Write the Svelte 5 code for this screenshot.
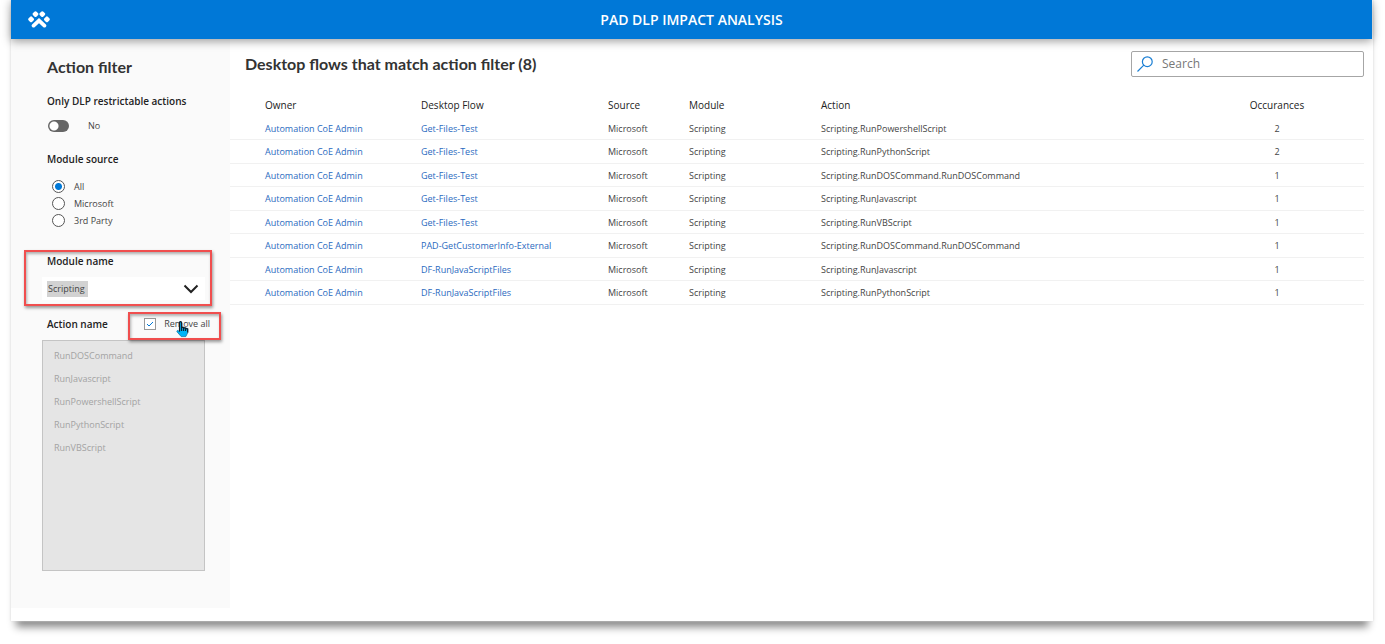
<script>
  const rows = [
    ['Get-Files-Test', 'RunPowershellScript', 2],
    ['Get-Files-Test', 'RunPythonScript', 2],
    ['Get-Files-Test', 'RunDOSCommand.RunDOSCommand', 1],
    ['Get-Files-Test', 'RunJavascript', 1],
    ['Get-Files-Test', 'RunVBScript', 1],
    ['PAD-GetCustomerInfo-External', 'RunDOSCommand.RunDOSCommand', 1],
    ['DF-RunJavaScriptFiles', 'RunJavascript', 1],
    ['DF-RunJavaScriptFiles', 'RunPythonScript', 1]
  ];
  const actions = ['RunDOSCommand', 'RunJavascript', 'RunPowershellScript', 'RunPythonScript', 'RunVBScript'];
  const sources = ['All', 'Microsoft', '3rd Party'];
  let source = $state('All');
  let removeAll = $state(true);
  let restrictable = $state(false);
  let search = $state('');
  const shown = $derived(rows.filter((r) => (r[0] + r[1]).toLowerCase().includes(search.toLowerCase())));
</script>

<div class="card">
  <header>
    <svg class="logo" viewBox="0 0 22 17" width="22" height="17" aria-hidden="true">
      <g fill="#fff">
        <rect x="5" y="0.6" width="5" height="5" rx="1.6" transform="rotate(45 7.5 3.1)" />
        <rect x="11.8" y="0.6" width="5" height="5" rx="1.6" transform="rotate(45 14.3 3.1)" />
        <rect x="0.6" y="5.8" width="5" height="5" rx="1.6" transform="rotate(45 3.1 8.3)" />
        <rect x="16.4" y="5.8" width="5" height="5" rx="1.6" transform="rotate(45 18.9 8.3)" />
      </g>
      <path d="M5.6 14.6 11 9.6l5.4 5" fill="none" stroke="#fff" stroke-width="3.8" stroke-linecap="round" stroke-linejoin="miter" />
    </svg>
    <h1>PAD DLP IMPACT ANALYSIS</h1>
  </header>

  <div class="body">
    <aside>
      <h2>Action filter</h2>

      <h3>Only DLP restrictable actions</h3>
      <label class="toggle">
        <input type="checkbox" role="switch" bind:checked={restrictable} />
        <span>{restrictable ? 'Yes' : 'No'}</span>
      </label>

      <h3 id="source-title">Module source</h3>
      <div class="radios" role="radiogroup" aria-labelledby="source-title">
        {#each sources as s}
          <label><input type="radio" name="source" value={s} bind:group={source} /><span>{s}</span></label>
        {/each}
      </div>

      <div class="module">
        <label for="module">Module name</label>
        <div class="combo">
          <select id="module"><option>Scripting</option></select>
          <svg viewBox="0 0 16 10" width="16" height="10" aria-hidden="true">
            <path d="M1.5 1.5 8 8l6.5-6.5" fill="none" stroke="#222" stroke-width="2" />
          </svg>
        </div>
        <div class="mark mark-module"></div>
      </div>

      <div class="action-head">
        <label for="actions">Action name</label>
        <label class="remove"><input type="checkbox" bind:checked={removeAll} /><span>Remove all</span></label>
        <div class="mark mark-remove"></div>
        <svg class="hand" viewBox="0 0 13 17" width="13" height="17" aria-hidden="true">
          <path d="M3.5 1.5c0-1.200 2-1.200 2 0v4.500l6.200 1.500v4.300L9.800 15.600H5.200L1 10.800c-.6-1 .6-1.800 1.500-1l1 1z" fill="#00b4f8" stroke="#0a6f9c" stroke-width=".7" />
          <path d="M3.500 10.500v-9c0-1.200 2-1.200 2 0V10M5.500 6.200l2 .2V10M7.500 6.700l2 .4V10M9.500 7.300l2.200.6V11.500" fill="none" stroke="#10202c" stroke-width="1.200" />
        </svg>
      </div>
      <select id="actions" multiple disabled={removeAll}>
        {#each actions as a}<option>{a}</option>{/each}
      </select>
    </aside>

    <main>
      <div class="top">
        <h2>Desktop flows that match action filter ({shown.length})</h2>
        <label class="search">
          <svg viewBox="0 0 16 16" width="16" height="16" aria-hidden="true">
            <circle cx="10.3" cy="5.7" r="4.9" fill="none" stroke="#1b7fd4" stroke-width="1.2" />
            <path d="M6.8 9.2.5 15.5" stroke="#1b7fd4" stroke-width="1.2" />
          </svg>
          <input type="text" placeholder="Search" aria-label="Search" bind:value={search} />
        </label>
      </div>

      <table>
        <thead>
          <tr>
            <th class="owner">Owner</th><th class="flow">Desktop Flow</th><th class="src">Source</th>
            <th class="mod">Module</th><th>Action</th><th class="num">Occurances</th>
          </tr>
        </thead>
        <tbody>
          {#each shown as [flow, action, count]}
            <tr>
              <td class="owner"><a href="#owner">Automation CoE Admin</a></td>
              <td><a href="#flow">{flow}</a></td>
              <td>Microsoft</td>
              <td>Scripting</td>
              <td>Scripting.{action}</td>
              <td class="num">{count}</td>
            </tr>
          {/each}
        </tbody>
      </table>
    </main>
  </div>
</div>

<style>
  :global(body) { background: #fff; }
  * { box-sizing: border-box; }
  h1, h2, h3 { margin: 0; }
  .card {
    margin: 0 12px 20px 11px;
    padding-bottom: 13px;
    background: #fff;
    color: #444;
    font: 9px/12px "Open Sans", "Noto Sans", sans-serif;
    box-shadow: 0 0 2px #ddd, 0 11px 8px -5px #888;
  }
  header {
    position: relative;
    z-index: 1;
    display: grid;
    grid-template-columns: 40px 1fr 40px;
    align-items: center;
    height: 39px;
    margin-right: 1px;
    background: #0078d7;
    box-shadow: 0 2px 9px rgba(0, 0, 0, 0.4);
  }
  .logo { margin-left: 17px; }
  h1 { color: #fff; font-size: 14px; line-height: 20px; font-weight: 600; text-align: center; }
  .body { display: flex; }
  aside {
    flex: none;
    width: 219px;
    padding: 17px 25px 37px 31px;
    background: #fafafa;
  }
  h2 { color: #333; font: 700 16px/22px Lato, sans-serif; }
  aside h2 { padding-left: 5px; }
  h3, .module > label, .action-head > label:first-child {
    display: block;
    padding-left: 5px;
    color: #222;
    font-size: 10px;
    line-height: 16px;
    font-weight: 650;
    white-space: nowrap;
  }
  h3 { margin-top: 15px; }
  input, select { font: inherit; color: inherit; margin: 0; outline: 0; }
  .toggle { display: flex; align-items: center; gap: 19px; height: 16px; margin: 9px 0 0 6px; }
  .toggle + h3 { margin-top: 17px; }
  .toggle input {
    appearance: none;
    width: 21px;
    height: 12px;
    border-radius: 6px;
    background: radial-gradient(circle at 6px 6px, #fff 4px, transparent 5px) #666;
  }
  .toggle input:checked { background: radial-gradient(circle at 15px 6px, #fff 4px, transparent 5px) #0078d7; }
  .radios { margin: 11px 0 0 10px; }
  .radios label { display: flex; align-items: center; gap: 9px; height: 17px; }
  .radios input {
    appearance: none;
    width: 13px;
    height: 13px;
    border: 1px solid #555;
    border-radius: 50%;
    background: #fff;
  }
  .radios input:checked { background: radial-gradient(circle, #0078d7 3px, #fff 4px); }
  .module { position: relative; margin-top: 24px; }
  .combo { display: grid; align-items: center; height: 23px; margin-top: 8px; background: #fff; }
  .combo > * { grid-area: 1 / 1; }
  .combo select {
    appearance: none;
    width: 100%;
    height: 23px;
    padding: 0 6px;
    border: 0;
    background: linear-gradient(#d2d2d2, #d2d2d2) 5px 4px / 41px 16px no-repeat #fff;
  }
  .combo svg { justify-self: end; margin-right: 6px; pointer-events: none; }
  .mark {
    position: absolute;
    border: 2px solid #f04e4e;
    box-shadow: 1px 2px 3px rgba(0, 0, 0, 0.4), inset 1px 2px 3px rgba(0, 0, 0, 0.3);
    pointer-events: none;
  }
  .mark-module { inset: -3px -7px -6px -18px; }
  .action-head { position: relative; display: flex; align-items: center; justify-content: space-between; margin: 15px -5px 0 0; height: 17px; }
  .remove { display: flex; align-items: center; gap: 8px; white-space: nowrap; }
  .remove input { appearance: none; width: 12px; height: 12px; border: 1px solid #999; background: #fff; }
  .remove input:checked {
    background: url("data:image/svg+xml,%3Csvg xmlns='http://www.w3.org/2000/svg' viewBox='0 0 10 10'%3E%3Cpath d='M2 5l2 2 4-4' fill='none' stroke='%230078d7'/%3E%3C/svg%3E") #fff;
  }
  .mark-remove { inset: -3px -11px -8px 86px; }
  .hand { position: absolute; left: 134px; top: 6px; }
  #actions {
    display: block;
    width: 100%;
    height: 231px;
    margin-top: 8px;
    padding: 8px 0;
    border: 1px solid #c4c4c4;
    border-radius: 0;
    background: #e5e5e5;
    opacity: 1;
    overflow: hidden;
    scrollbar-width: none;
  }
  #actions option { height: 23px; padding: 0 11px; line-height: 23px; min-height: 0; color: #a3a3a3; }
  main { flex: 1; min-width: 0; padding: 12px 9px 0 0; }
  .top { display: flex; align-items: center; justify-content: space-between; gap: 16px; padding-left: 15px; }
  .search {
    display: flex;
    align-items: center;
    gap: 9px;
    width: 233px;
    height: 26px;
    padding: 0 6px 0 5px;
    border: 1px solid #a6a6a6;
    border-radius: 2px;
  }
  .search svg { flex: none; }
  .search input { flex: 1; min-width: 0; padding: 0; border: 0; background: none; font-size: 12px; line-height: 18px; }
  .search input::placeholder { color: #777; opacity: 1; }
  table { width: 100%; margin-top: 16px; table-layout: fixed; border-collapse: separate; border-spacing: 0; }
  th, td { padding: 0; text-align: left; white-space: nowrap; }
  th { height: 24px; font-size: 10px; font-weight: 500; color: #222; }
  td { height: 23px; padding-top: 1px; border-bottom: 1px solid #f1f1f1; }
  tbody tr:nth-child(even) td { height: 24px; }
  th.owner { width: 191px; }
  .owner { padding-left: 35px; }
  .flow { width: 187px; }
  .src { width: 81px; }
  .mod { width: 132px; }
  .num { width: 174px; text-align: center; }
  a { color: #2a6ac0; text-decoration: none; }
</style>
